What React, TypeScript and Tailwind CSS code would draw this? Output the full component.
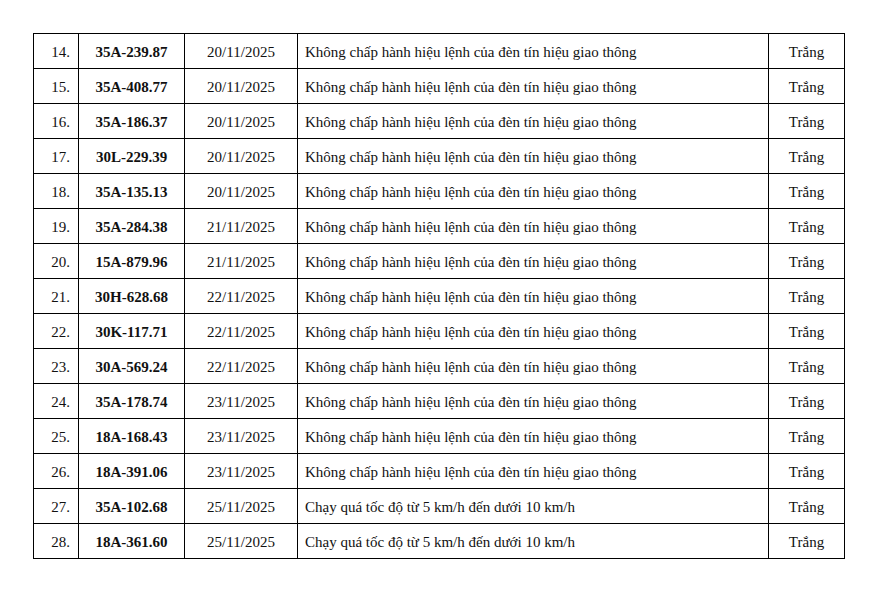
const rows: [string, string, string, string][] = [
  ["14.", "35A-239.87", "20/11/2025", "Không chấp hành hiệu lệnh của đèn tín hiệu giao thông"],
  ["15.", "35A-408.77", "20/11/2025", "Không chấp hành hiệu lệnh của đèn tín hiệu giao thông"],
  ["16.", "35A-186.37", "20/11/2025", "Không chấp hành hiệu lệnh của đèn tín hiệu giao thông"],
  ["17.", "30L-229.39", "20/11/2025", "Không chấp hành hiệu lệnh của đèn tín hiệu giao thông"],
  ["18.", "35A-135.13", "20/11/2025", "Không chấp hành hiệu lệnh của đèn tín hiệu giao thông"],
  ["19.", "35A-284.38", "21/11/2025", "Không chấp hành hiệu lệnh của đèn tín hiệu giao thông"],
  ["20.", "15A-879.96", "21/11/2025", "Không chấp hành hiệu lệnh của đèn tín hiệu giao thông"],
  ["21.", "30H-628.68", "22/11/2025", "Không chấp hành hiệu lệnh của đèn tín hiệu giao thông"],
  ["22.", "30K-117.71", "22/11/2025", "Không chấp hành hiệu lệnh của đèn tín hiệu giao thông"],
  ["23.", "30A-569.24", "22/11/2025", "Không chấp hành hiệu lệnh của đèn tín hiệu giao thông"],
  ["24.", "35A-178.74", "23/11/2025", "Không chấp hành hiệu lệnh của đèn tín hiệu giao thông"],
  ["25.", "18A-168.43", "23/11/2025", "Không chấp hành hiệu lệnh của đèn tín hiệu giao thông"],
  ["26.", "18A-391.06", "23/11/2025", "Không chấp hành hiệu lệnh của đèn tín hiệu giao thông"],
  ["27.", "35A-102.68", "25/11/2025", "Chạy quá tốc độ từ 5 km/h đến dưới 10 km/h"],
  ["28.", "18A-361.60", "25/11/2025", "Chạy quá tốc độ từ 5 km/h đến dưới 10 km/h"],
];

export default function App() {
  return (
    <div className="w-[872px] h-[595px] bg-white pt-[33px] pl-[33px] font-['Liberation_Serif','Times_New_Roman',serif] text-[15px] text-[#111]">
      <table className="border-collapse table-fixed w-[811px]">
        <colgroup>
          <col className="w-[45px]" />
          <col className="w-[106px]" />
          <col className="w-[113px]" />
          <col className="w-[471px]" />
          <col className="w-[76px]" />
        </colgroup>
        <tbody>
          {rows.map(([no, plate, date, desc]) => (
            <tr key={no} className="h-[35px]">
              <td className="border border-black text-right pr-[8px] pt-[2px]">{no}</td>
              <td className="border border-black text-center font-bold pt-[2px]">{plate}</td>
              <td className="border border-black text-center pt-[2px]">{date}</td>
              <td className="border border-black text-left pl-[7px] pt-[2px]">{desc}</td>
              <td className="border border-black text-center pt-[2px]">Trắng</td>
            </tr>
          ))}
        </tbody>
      </table>
    </div>
  );
}
